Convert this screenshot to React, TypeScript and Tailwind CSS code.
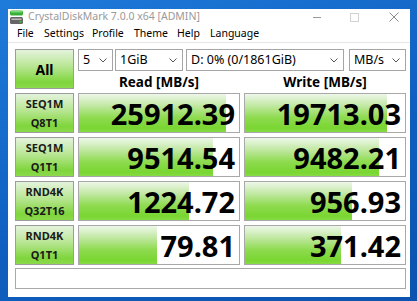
const rows = [
  { a: "SEQ1M", b: "Q8T1", read: "25912.39", rp: 92, write: "19713.03", wp: 89 },
  { a: "SEQ1M", b: "Q1T1", read: "9514.54", rp: 84, write: "9482.21", wp: 84 },
  { a: "RND4K", b: "Q32T16", read: "1224.72", rp: 69, write: "956.93", wp: 67 },
  { a: "RND4K", b: "Q1T1", read: "79.81", rp: 49, write: "371.42", wp: 60 },
];

const menu = [
  { label: "File", w: "w-[27px]" },
  { label: "Settings", w: "w-[48px]" },
  { label: "Profile", w: "w-[42px]" },
  { label: "Theme", w: "w-[43px]" },
  { label: "Help", w: "w-[33px]" },
  { label: "Language", w: "w-[60px]" },
];

function Chevron() {
  return (
    <svg width="8" height="5" viewBox="0 0 8 5" className="shrink-0">
      <polyline points="0.5,0.5 4,4 7.5,0.5" fill="none" stroke="#555" strokeWidth="1" />
    </svg>
  );
}

function Combo({ text, w, ml }: { text: string; w: string; ml: string }) {
  return (
    <div className={`${w} ${ml} flex h-[22px] items-center justify-between border border-[#a5a5a5] bg-white pl-[4px] pr-[5px] text-[12.5px] text-black`}>
      <span className="whitespace-nowrap">{text}</span>
      <Chevron />
    </div>
  );
}

function Result({ value, pct }: { value: string; pct: number }) {
  return (
    <div className="relative h-[40px] w-[162px] border border-[#a8a8a8] bg-white">
      <div
        className="h-full bg-[linear-gradient(to_bottom,#eef7ea,#c2e9a4_30%,#8fdb50_62%,#79d631_90%,#86db44)]"
        style={{ width: `${pct}%` }}
      />
      <span className="absolute inset-y-0 right-[4px] flex items-center text-[29px] font-bold leading-none text-black">
        {value}
      </span>
    </div>
  );
}

export default function App() {
  return (
    <div className="h-[301px] w-[417px] overflow-hidden bg-[linear-gradient(160deg,#1f7bd9,#0f5fc0_55%,#0b53ae)] pl-[8px] pt-[9px] font-['Noto_Sans',sans-serif]">
      <div className="flex h-[288px] w-[402px] flex-col bg-white">
        <div className="flex h-[16px] items-center pl-[2px] text-[10.5px] text-[#9a9a9a]">
          <svg width="14" height="15" viewBox="0 0 14 15" className="shrink-0">
            <rect x="0" y="0.5" width="13" height="5" rx="1.5" fill="#38b038" />
            <rect x="1" y="1" width="11" height="1.5" fill="#7fd67f" />
            <rect x="0" y="7" width="13" height="7" rx="1.5" fill="#666" />
            <rect x="1.5" y="8.5" width="10" height="1.5" fill="#b9b9b9" />
            <rect x="9.5" y="11" width="2" height="1.5" fill="#3ccc3c" />
          </svg>
          <span className="ml-[4px] whitespace-nowrap">CrystalDiskMark 7.0.0 x64 [ADMIN]</span>
          <svg width="8" height="1" viewBox="0 0 8 1" className="ml-auto shrink-0">
            <rect width="8" height="1" fill="#9a9a9a" />
          </svg>
          <svg width="9" height="9" viewBox="0 0 9 9" className="ml-[29px] shrink-0">
            <rect x="0.5" y="0.5" width="8" height="8" fill="none" stroke="#d2d2d2" />
          </svg>
          <svg width="10" height="10" viewBox="0 0 10 10" className="ml-[30px] mr-[11px] shrink-0">
            <path d="M0.5 0.5 L9.5 9.5 M9.5 0.5 L0.5 9.5" stroke="#8c8c8c" strokeWidth="1" />
          </svg>
        </div>

        <div className="flex h-[18px] items-center border-b border-[#e6e6e6] pl-[9px] text-[10.5px] text-black">
          {menu.map((m) => (
            <span key={m.label} className={`${m.w} whitespace-nowrap`}>
              {m.label}
            </span>
          ))}
        </div>

        <div className="flex flex-col pl-[7px] pt-[6px]">
          <div className="flex h-[44px] gap-[4px]">
            <div className="flex h-[40px] w-[59px] items-center justify-center border border-[#9c9c9c] bg-[linear-gradient(to_bottom,#e4f3dc,#b6e590_45%,#7fd53b_85%,#8bda4d)] text-[14px] font-bold text-black">
              All
            </div>
            <div className="flex w-[328px] flex-col">
              <div className="flex">
                <Combo text="5" w="w-[35px]" ml="ml-0" />
                <Combo text="1GiB" w="w-[68px]" ml="ml-[2px]" />
                <Combo text="D: 0% (0/1861GiB)" w="w-[158px]" ml="ml-[3px]" />
                <Combo text="MB/s" w="w-[57px]" ml="ml-[5px]" />
              </div>
              <div className="flex h-[22px] items-center gap-[4px] text-[13.5px] font-bold text-black">
                <span className="w-[162px] text-center">Read [MB/s]</span>
                <span className="w-[162px] text-center">Write [MB/s]</span>
              </div>
            </div>
          </div>

          <div className="flex flex-col gap-[4px]">
            {rows.map((r) => (
              <div key={r.a + r.b} className="flex gap-[4px]">
                <div className="flex h-[40px] w-[59px] flex-col items-center justify-center border border-[#9c9c9c] bg-[linear-gradient(to_bottom,#e4f3dc,#b6e590_45%,#7fd53b_85%,#8bda4d)] text-[11px] font-bold leading-[19px] text-[#1a1a1a]">
                  <span>{r.a}</span>
                  <span>{r.b}</span>
                </div>
                <Result value={r.read} pct={r.rp} />
                <Result value={r.write} pct={r.wp} />
              </div>
            ))}
          </div>

          <div className="mt-[3px] h-[21px] w-[391px] border border-[#a8a8a8] bg-white" />
        </div>
      </div>
    </div>
  );
}
